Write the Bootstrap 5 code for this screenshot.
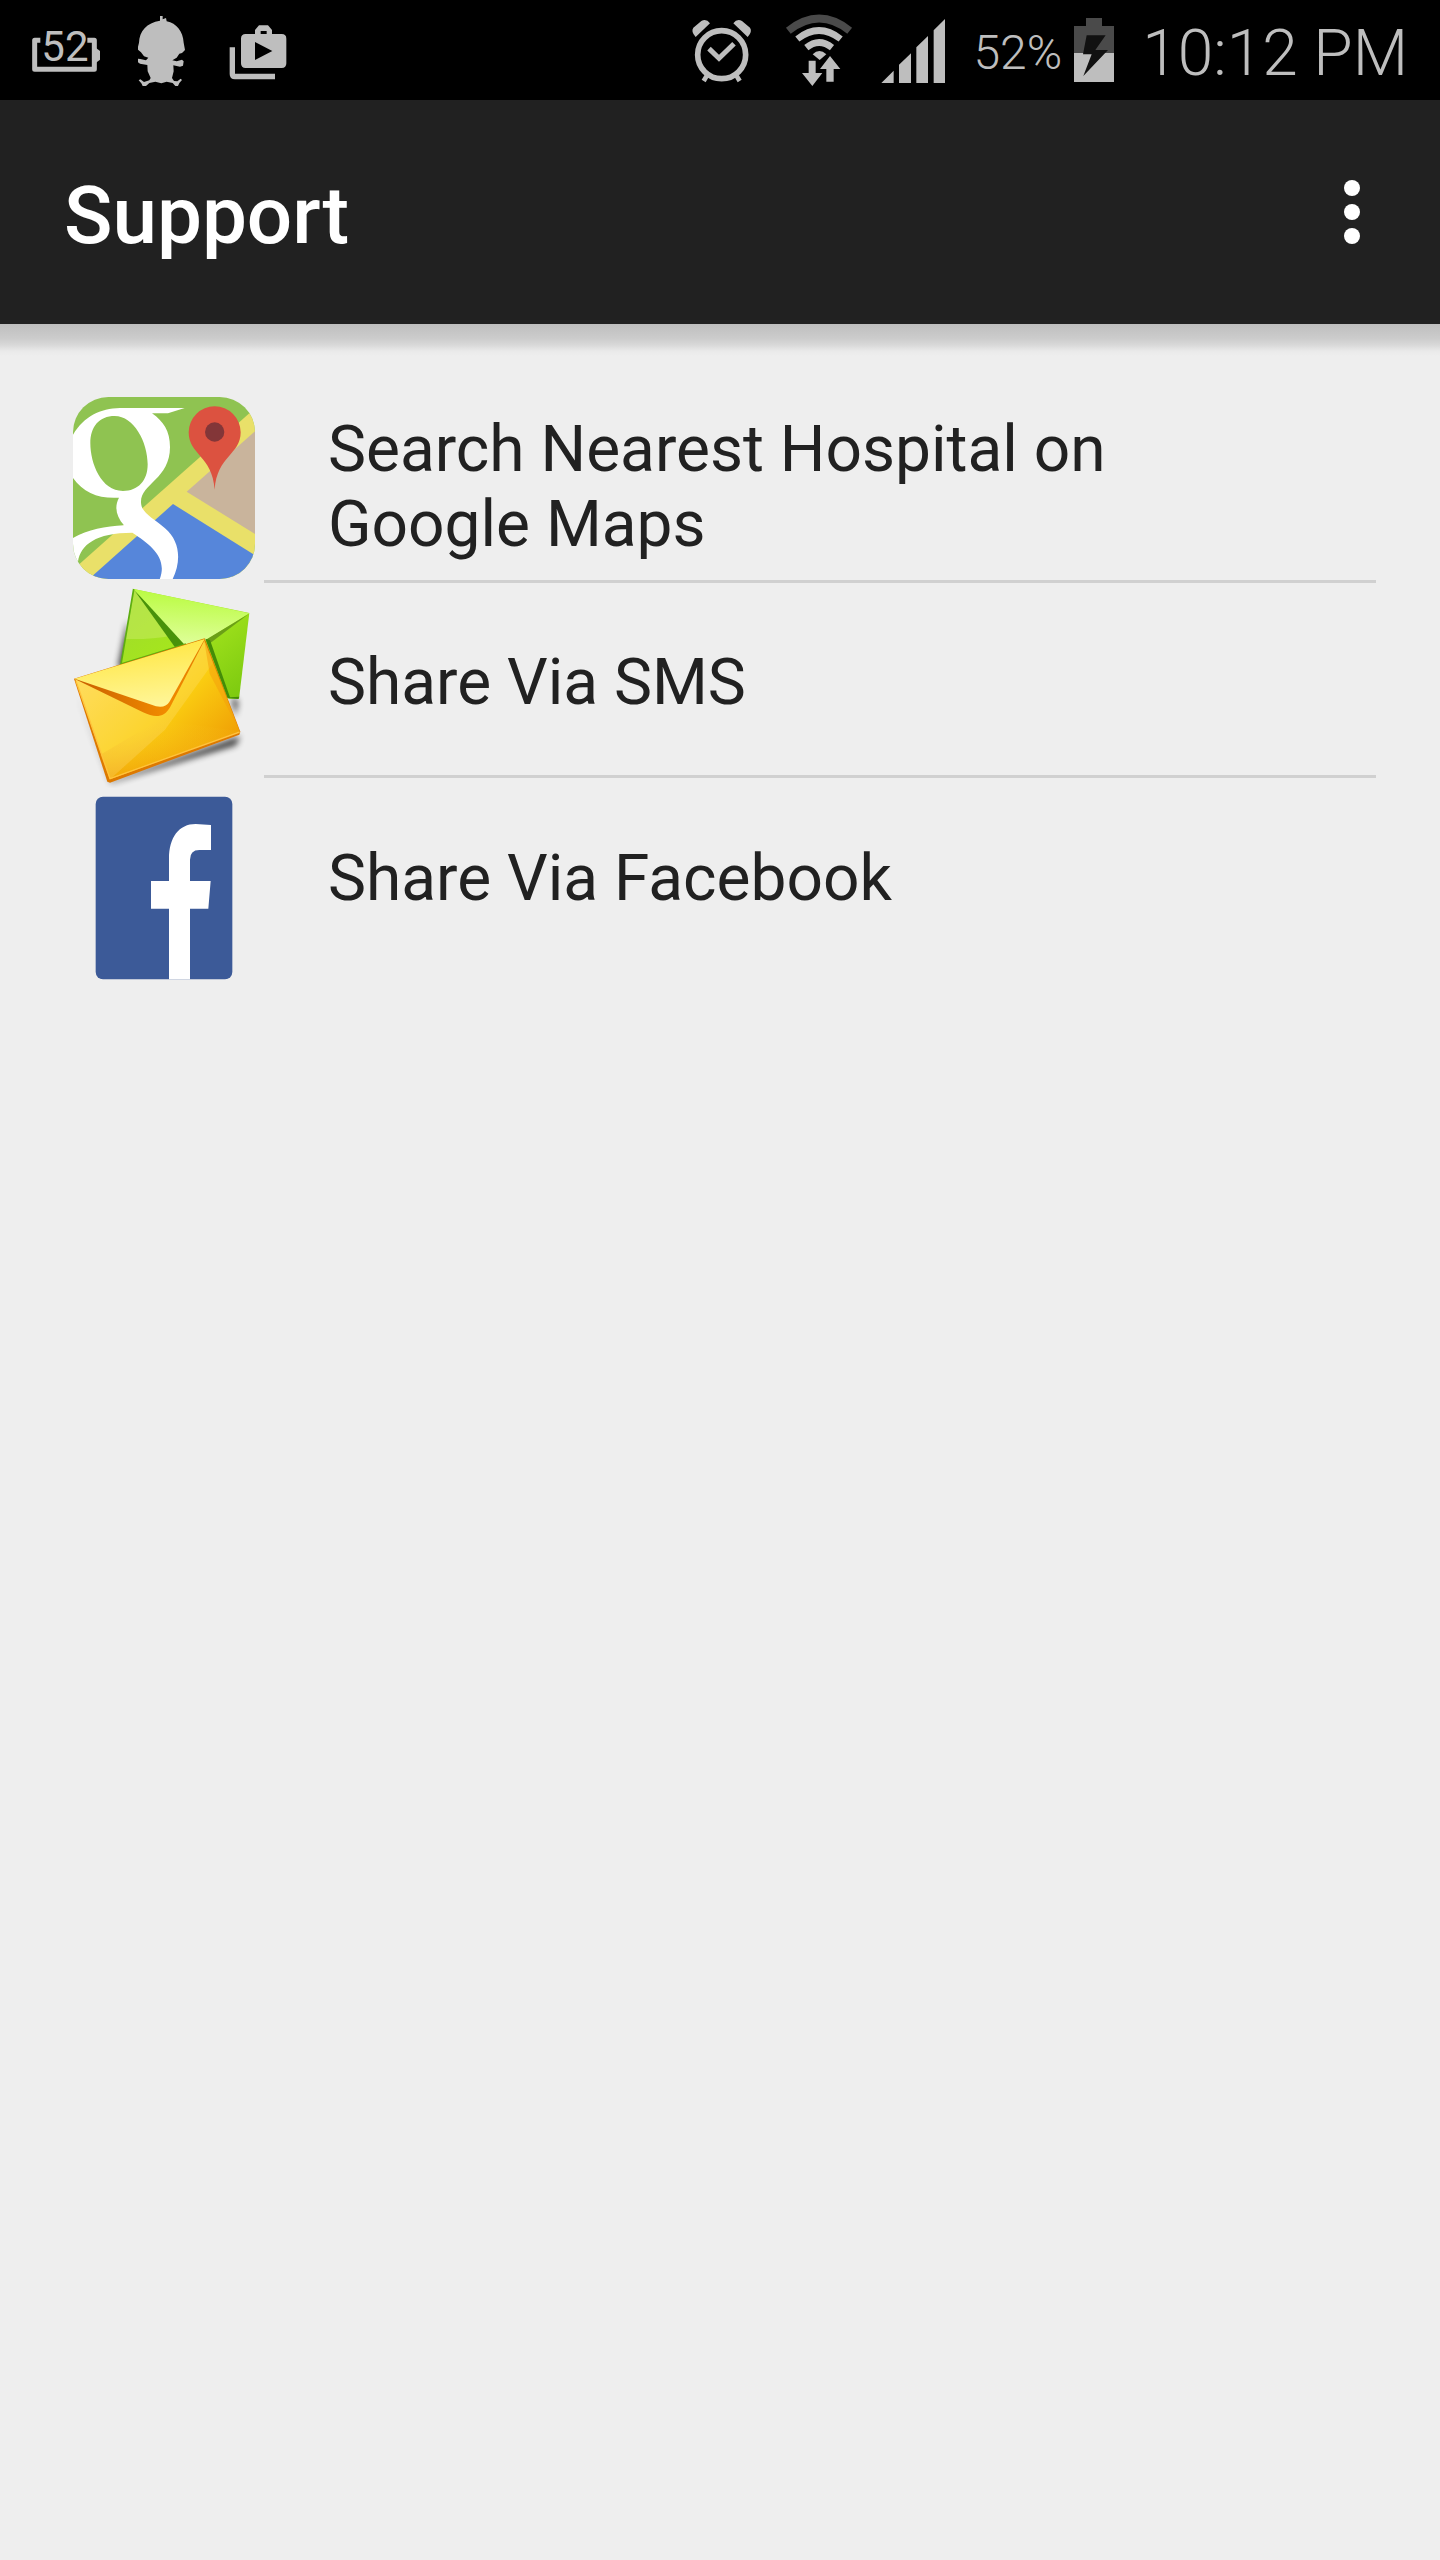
<!DOCTYPE html>
<html lang="en">
<head>
<meta charset="utf-8">
<meta name="viewport" content="width=device-width, initial-scale=1">
<title>Support</title>
<link href="https://cdn.jsdelivr.net/npm/bootstrap@5.3.0/dist/css/bootstrap.min.css" rel="stylesheet">
<style>
body { font-family: Roboto, "Noto Sans", sans-serif; background: #eee; color: #212121; }
.status-strip { background: #000; color: #bebebe; height: 100px; padding-left: 32px; padding-right: 32px; fill: #bebebe; }
.status-strip svg { height: 100px; display: block; flex: none; }
.status-left { gap: 36px; }
.status-right { gap: 28px; }
.status-power { gap: 12px; }
.status-pct { font-size: 48px; line-height: 56px; padding-top: 6px; }
.status-time { font-size: 64px; line-height: 76px; padding-top: 8px; }
.app-header { background: #212121; height: 224px; padding: 8px 64px 0; }
.app-title { font-size: 80px; line-height: 96px; font-weight: 500; }
.more-btn { width: 48px; height: 96px; }
.header-shade { height: 32px; background: linear-gradient(#bebebe, #cccccc 45%, #d8d8d8 65%, #eaeaea 85%, #eee); }
.support-list { padding: 32px 64px 0; }
.icon-column svg { width: 200px; height: 200px; display: block; }
.action-row { min-height: 195px; padding: 6px 64px 0; font-size: 64px; line-height: 75px; border-bottom: 3px solid #d0d0d0; color: #212121; }
.action-row:last-child { border-bottom: 0; }
</style>
<script src="https://cdn.jsdelivr.net/npm/bootstrap@5.3.0/dist/js/bootstrap.bundle.min.js"></script>
</head>
<body>
<div class="status-strip d-flex align-items-center justify-content-between">
  <div class="status-left d-flex align-items-center">
    <svg width="68" viewBox="96 0 204 300" role="img" aria-label="Battery 52">
      <path d="M121 121H104V208H283V121H262" fill="none" stroke="#bebebe" stroke-width="15" stroke-linejoin="round"/>
      <path d="M288 144l12 9v26l-12 9z"/>
      <text x="124" y="182" font-size="126">52</text>
    </svg>
    <svg width="52" viewBox="408 0 156 300" aria-hidden="true">
      <path d="M480 48H488V58L498 54L500 64C530 70 549 94 551 128L555 150L546 159L538 161L530 173L517 181L530 184L546 179L551 184L549 197L540 200L520 196L521 214L516 234L522 243L532 244L542 236L546 240L538 249L534 258H526L518 249L500 245L484 250L466 245L448 249L438 258H428L424 250L416 241L421 238L432 246L448 241L452 234L443 214L442 195L420 191L414 187L414 176L421 177L438 181L445 173L432 169L423 157L414 149V140L417 128C418 94 440 68 480 62Z"/>
    </svg>
    <svg width="64" viewBox="672 0 192 300" aria-hidden="true">
      <path fill-rule="evenodd" d="M765 102V90l12-14h27l12 14v12h29q14 0 14 14v74q0 14-14 14H737q-14 0-14-14v-74q0-14 14-14zm17 0h18v-9h-18zm-17 24v54l52-27z"/>
      <path d="M689 142h16v79h120v17H705q-16 0-16-16z"/>
    </svg>
  </div>
  <div class="status-right d-flex align-items-center">
    <svg width="66" viewBox="90 0 198 300" aria-hidden="true">
      <g fill="none" stroke="#bebebe"><circle cx="188" cy="164" r="72" stroke-width="17"/><path d="M150 146l30 29 45-44" stroke-width="15"/><path d="M144 226l-10 17M232 226l10 17" stroke-width="14"/></g>
      <path d="M110 111l43-41q-11-15-26-7l-24 20q-8 11 7 28zM266 111l-43-41q11-15 26-7l24 20q8 11-7 28z"/>
    </svg>
    <svg width="70" viewBox="378 0 210 300" aria-hidden="true">
      <g fill="none" stroke="#bebebe" stroke-width="20"><path d="M394 92q93-73 184 0" stroke="#4a4a4a" stroke-width="23"/><path d="M421 117q65-51 130 0M448 143q38-31 77 0"/></g>
      <path d="M467 163q20-20 41 0l-20 17z"/>
      <path d="M455 182h21v37h20l-30 39-31-39h20zM508 245v-38h-19l30-39 31 39h-20v38z"/>
    </svg>
    <svg width="64" viewBox="678 0 192 300" aria-hidden="true">
      <path d="M679 249l37-37v37zM732 249v-55l36-34v89zM784 249V142l35-34v141zM836 249V91l34-34v192z"/>
    </svg>
    <div class="status-power d-flex align-items-center">
      <span class="status-pct fw-light">52%</span>
      <svg width="40" viewBox="105 0 120 300" aria-hidden="true">
        <path d="M105 78h36V54h48v24h36v81H105z" fill="#4a4a4a"/><path d="M105 159h120v87H105z"/>
        <path d="M143 106h57l-31 44h38l-74 78 25-65h-26z" fill="#111"/>
      </svg>
    </div>
    <span class="status-time fw-light">10:12 PM</span>
  </div>
</div>
<header class="app-header d-flex align-items-center justify-content-between">
  <h1 class="app-title text-white m-0">Support</h1>
  <button type="button" class="more-btn btn p-0 border-0" aria-label="More options">
    <svg class="d-block mx-auto" width="16" height="96" viewBox="0 0 16 96" fill="#fff"><circle cx="8" cy="20" r="8"/><circle cx="8" cy="44" r="8"/><circle cx="8" cy="68" r="8"/></svg>
  </button>
</header>
<div class="header-shade"></div>
<main class="support-list d-flex align-items-start">
  <div class="icon-column flex-shrink-0" aria-hidden="true">
    <svg viewBox="72 24 600 600">
      <clipPath id="tile"><rect x="99" y="51" width="546" height="546" rx="106"/></clipPath>
      <g clip-path="url(#tile)">
        <path d="M99 51h546v546H99z" fill="#8fc351"/>
        <path d="M645 85L99 569v28h546z" fill="#e9e069"/>
        <path d="M645 154L440 335l205 127z" fill="#c9b49c"/>
        <path d="M147 597L399 372l246 154v71z" fill="#5686da"/>
        <path fill="#fff" fill-rule="evenodd" d="M434 84H240C175 86 125 112 90 180v100c32 55 80 77 147 73-15 28-8 57 15 83-60 3-115 14-162 43l10 90 14-24c8-51 53-87 163-87 55 36 110 76 80 145h38c29-55 28-117-20-158-35-32-70-44-72-77-3-56 87-70 87-167 0-48-20-77-54-101h48zM224 108c58 0 99 79 99 145 0 50-29 80-74 80-66 0-98-83-98-143 0-51 27-82 73-82z"/>
      </g>
      <path d="M524 329c-7-101-78-105-78-172a78 78 0 0 1 156 0c0 67-71 71-78 172z" fill="#dc5240"/>
      <circle cx="524" cy="156" r="29" fill="#833638"/>
    </svg>
    <svg viewBox="72 54 600 600">
      <defs>
        <linearGradient id="greenBody" x2="1" y2="1"><stop stop-color="#9ed92f"/><stop offset=".45" stop-color="#a5e51e"/><stop offset="1" stop-color="#79c70e"/></linearGradient>
        <linearGradient id="greenFlap" x1=".5" x2=".4" y2="1"><stop stop-color="#b8fb3d"/><stop offset="1" stop-color="#e1ff9e"/></linearGradient>
        <linearGradient id="goldBody" x1=".1" y1=".2" x2=".9" y2=".9"><stop stop-color="#ffd94a"/><stop offset=".5" stop-color="#fbcf12"/><stop offset="1" stop-color="#ee9803"/></linearGradient>
        <linearGradient id="goldFlap" x1=".5" x2=".7" y2="1"><stop stop-color="#ffe63f"/><stop offset="1" stop-color="#fff69b"/></linearGradient>
        <linearGradient id="goldFold" x1="0" x2="1"><stop stop-color="#c85e00"/><stop offset=".7" stop-color="#f18b00"/><stop offset="1" stop-color="#e47b00"/></linearGradient>
        <linearGradient id="goldBase" x1=".6" y1="0" x2=".4" y2="1"><stop stop-color="#f9cd24" stop-opacity="0"/><stop offset="1" stop-color="#f09c06"/></linearGradient>
        <filter id="soft" x="-20%" y="-20%" width="140%" height="140%"><feGaussianBlur stdDeviation="10"/></filter>
      </defs>
      <path d="M262 150l-28 140 40 20zM575 380l20 15-10 45zM110 370l105 262 385-134-12 28-375 112z" opacity=".75" filter="url(#soft)"/>
      <path d="M281 57L243 282l325 104h29l31-257z" fill="url(#greenBody)"/>
      <path d="M284 60L256 207q80 2 138-10z" fill="#c9ec64" opacity=".5"/>
      <path d="M284 62l121 170 40-10z" fill="#48920a"/>
      <path d="M281 57l347 73-139 86-49 15z" fill="url(#greenFlap)"/>
      <path d="M627 131L500 208l10 12z" fill="#6b9f17"/>
      <path d="M496 206l14 4 60 172 28-2-3 7-32-3z" fill="#438c08"/>
      <path d="M281 57L243 282l195-60" fill="none" stroke="#5dad12" stroke-width="5"/>
      <path d="M102 326l392-121 107 280-3 9-388 144-8-3z" fill="#dd7900"/>
      <path d="M106 328l386-119 107 275-389 144z" fill="url(#goldBody)"/>
      <path d="M210 628l-29-74 176-104 242 34z" fill="url(#goldBase)" opacity=".65"/>
      <path d="M106 328l104 300 165-149 144-200-27-70z" fill="#ffe79c" opacity=".22"/>
      <path d="M492 208l108 277-91-174z" fill="#f49e0c" opacity=".5"/>
      <path d="M106 328l203 99c36 17 63 17 82-17L494 210z" fill="url(#goldFold)"/>
      <path d="M104 326l390-119-106 189q-12 19-40 13z" fill="url(#goldFlap)"/>
      <path d="M108 333l102 293 389-140" fill="none" stroke="#ffc33c" stroke-width="4"/>
    </svg>
    <svg viewBox="72 24 600 600">
      <rect x="167" y="50" width="410" height="548" rx="22" fill="#3c5a98"/>
      <path d="M387 598V386h-54v-83h54v-67c0-64 30-104 80-104l46 3v75h-35q-28 0-28 29v64h62l-7 83h-55v212z" fill="#fff"/>
    </svg>
  </div>
  <nav class="flex-grow-1 d-flex flex-column" aria-label="Support options">
    <a href="#maps" class="action-row d-flex align-items-center text-decoration-none">Search Nearest Hospital on Google Maps</a>
    <a href="#sms" class="action-row d-flex align-items-center text-decoration-none">Share Via SMS</a>
    <a href="#facebook" class="action-row d-flex align-items-center text-decoration-none">Share Via Facebook</a>
  </nav>
</main>
</body>
</html>
